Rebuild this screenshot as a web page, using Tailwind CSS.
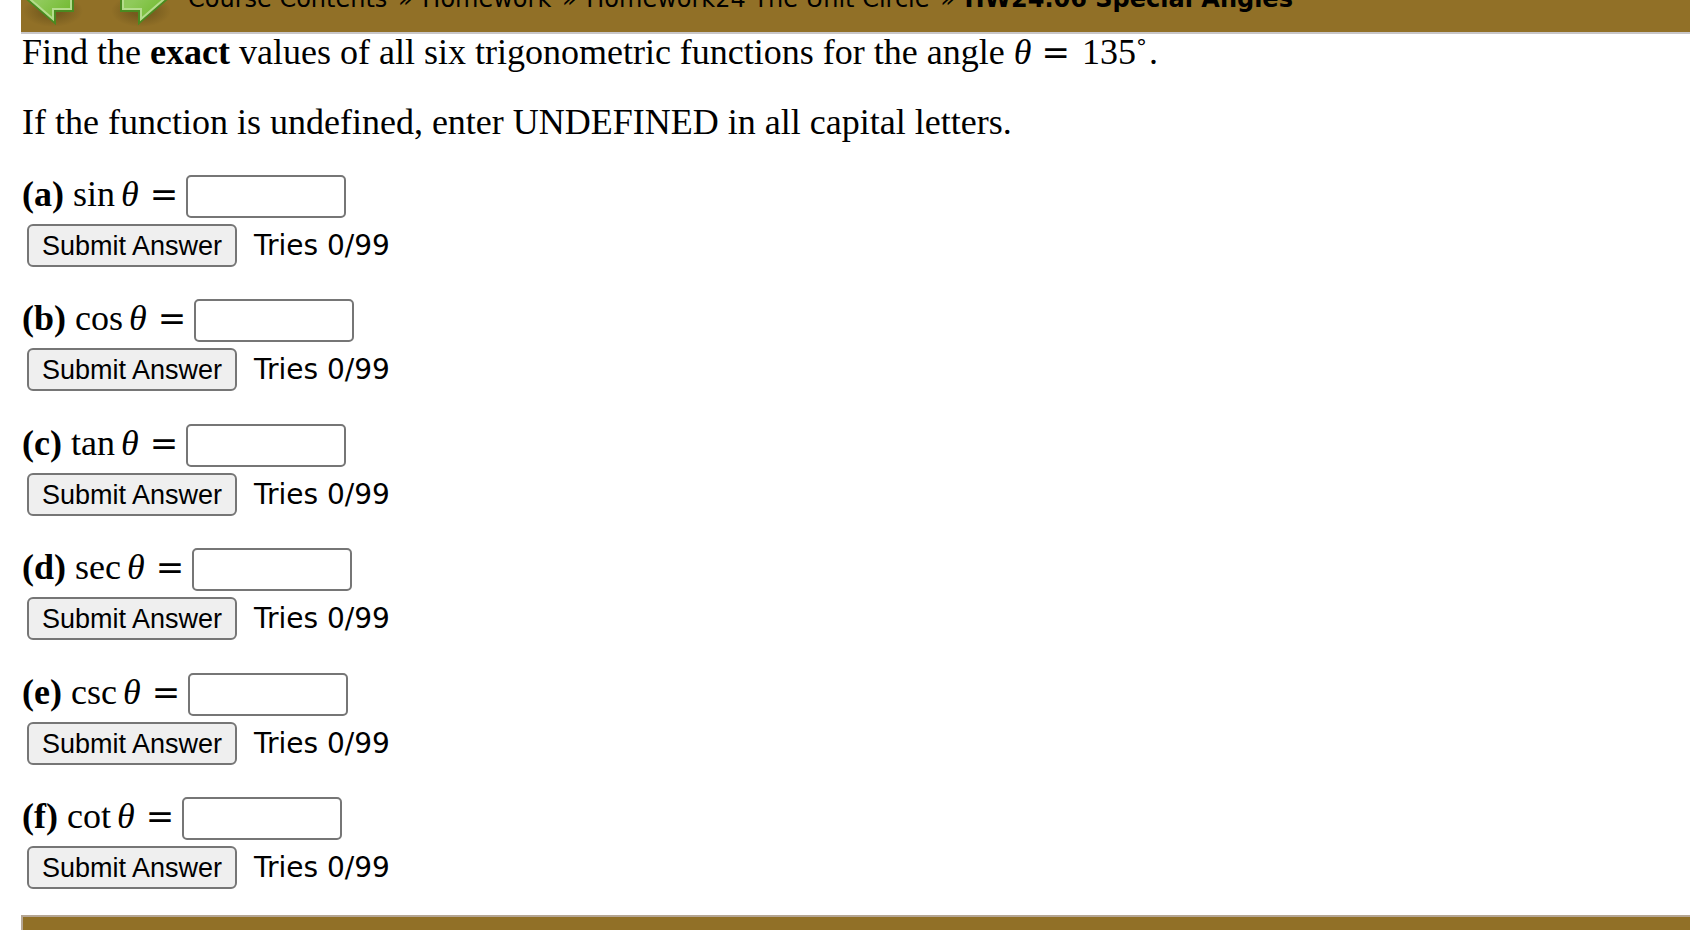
<!DOCTYPE html>
<html lang="en">
<head>
  <meta charset="UTF-8">
  <meta name="viewport" content="width=device-width, initial-scale=1.0">
  <title>HW24.06 Special Angles</title>
  <script src="https://cdn.jsdelivr.net/npm/@tailwindcss/browser@4"></script>
</head>
<body class="bg-white text-black pl-[21px] min-h-screen flex flex-col overflow-hidden font-['Liberation_Serif',serif] text-[36px]">

  <!-- Breadcrumb bar -->
  <nav aria-label="Breadcrumb" class="h-[34px] shrink-0 flex items-end overflow-hidden bg-[#917027] border-b-2 border-[#c8c6c8] font-['DejaVu_Sans',sans-serif] text-[24px] leading-8 whitespace-nowrap">
    <a href="#" aria-label="Previous" class="shrink-0 ml-[6px] mr-[44px]">
      <svg width="48" height="59" viewBox="0 0 48 59" class="block overflow-visible">
        <defs>
          <linearGradient id="leaf" x1="0" y1="0" x2="1" y2="1">
            <stop offset="0.4" stop-color="#8fca5a"/>
            <stop offset="1" stop-color="#68b422"/>
          </linearGradient>
          <radialGradient id="shade">
            <stop offset="0.3" stop-color="#4a3a10" stop-opacity="0.4"/>
            <stop offset="1" stop-color="#4a3a10" stop-opacity="0"/>
          </radialGradient>
        </defs>
        <ellipse cx="26" cy="38" rx="30" ry="16" fill="url(#shade)"/>
        <path d="M1 27 L28 4 V16 H46 V38 H28 V50 Z" fill="url(#leaf)" stroke="#4a8a20" stroke-width="2"/>
        <path d="M4 27 L26 8 V18 H44 V36 H26 V46 Z" fill="none" stroke="#b4dc8c" stroke-width="2"/>
      </svg>
    </a>
    <a href="#" aria-label="Next" class="shrink-0 mr-[21px]">
      <svg width="48" height="59" viewBox="0 0 48 59" class="block overflow-visible">
        <ellipse cx="22" cy="38" rx="30" ry="16" fill="url(#shade)"/>
        <path d="M47 27 L20 4 V16 H2 V38 H20 V50 Z" fill="url(#leaf)" stroke="#4a8a20" stroke-width="2"/>
        <path d="M44 27 L22 8 V18 H4 V36 H22 V46 Z" fill="none" stroke="#b4dc8c" stroke-width="2"/>
      </svg>
    </a>
    <div class="pb-[17px]">
      <a href="#">Course Contents</a> <span class="ml-[3px] mr-[2px]">»</span>
      <a href="#">Homework</a> <span class="ml-[3px] mr-[2px]">»</span>
      <a href="#">Homework24 The Unit Circle</a> <span class="ml-[3px] mr-[2px]">»</span>
      <b>HW24.06 Special Angles</b>
    </div>
  </nav>

  <main class="pl-px pb-[26px]">
    <p class="leading-[36px]">Find the <b>exact</b> values of all six trigonometric functions for the angle <i>θ</i><span class="font-['DejaVu_Serif',serif] text-[34px] leading-none ml-[10px] mr-[12px]">=</span>135<span class="font-['DejaVu_Sans',sans-serif] text-[22px] leading-none align-[9px] mr-[2px]">°</span>.</p>
    <p class="leading-[36px] mt-[34px]">If the function is undefined, enter UNDEFINED in all capital letters.</p>

    <form class="mt-[35px]">
      <div class="mb-8">
        <div class="flex h-[43px]">
          <label for="sin" class="leading-[39px]"><b>(a)</b> sin<i class="ml-[6px]">θ</i><span class="font-['DejaVu_Serif',serif] text-[34px] leading-none ml-[11px]">=</span></label>
          <input id="sin" type="text" class="w-[160px] ml-2 px-1 border-2 border-[#767676] rounded-[5px] bg-white text-[27px] font-['Liberation_Sans',sans-serif]">
        </div>
        <div class="flex items-center mt-[6px] ml-[5px]">
          <button type="button" class="w-[210px] h-[43px] border-2 border-[#767676] rounded-[6px] bg-[#efefef] font-['Liberation_Sans',sans-serif] text-[27px] leading-8 whitespace-nowrap">Submit Answer</button>
          <span class="ml-[17px] font-['DejaVu_Sans',sans-serif] text-[28px] leading-8">Tries 0/99</span>
        </div>
      </div>

      <div class="mb-[33px]">
        <div class="flex h-[43px]">
          <label for="cos" class="leading-[39px]"><b>(b)</b> cos<i class="ml-[6px]">θ</i><span class="font-['DejaVu_Serif',serif] text-[34px] leading-none ml-[11px]">=</span></label>
          <input id="cos" type="text" class="w-[160px] ml-2 px-1 border-2 border-[#767676] rounded-[5px] bg-white text-[27px] font-['Liberation_Sans',sans-serif]">
        </div>
        <div class="flex items-center mt-[6px] ml-[5px]">
          <button type="button" class="w-[210px] h-[43px] border-2 border-[#767676] rounded-[6px] bg-[#efefef] font-['Liberation_Sans',sans-serif] text-[27px] leading-8 whitespace-nowrap">Submit Answer</button>
          <span class="ml-[17px] font-['DejaVu_Sans',sans-serif] text-[28px] leading-8">Tries 0/99</span>
        </div>
      </div>

      <div class="mb-8">
        <div class="flex h-[43px]">
          <label for="tan" class="leading-[39px]"><b>(c)</b> tan<i class="ml-[6px]">θ</i><span class="font-['DejaVu_Serif',serif] text-[34px] leading-none ml-[11px]">=</span></label>
          <input id="tan" type="text" class="w-[160px] ml-2 px-1 border-2 border-[#767676] rounded-[5px] bg-white text-[27px] font-['Liberation_Sans',sans-serif]">
        </div>
        <div class="flex items-center mt-[6px] ml-[5px]">
          <button type="button" class="w-[210px] h-[43px] border-2 border-[#767676] rounded-[6px] bg-[#efefef] font-['Liberation_Sans',sans-serif] text-[27px] leading-8 whitespace-nowrap">Submit Answer</button>
          <span class="ml-[17px] font-['DejaVu_Sans',sans-serif] text-[28px] leading-8">Tries 0/99</span>
        </div>
      </div>

      <div class="mb-[33px]">
        <div class="flex h-[43px]">
          <label for="sec" class="leading-[39px]"><b>(d)</b> sec<i class="ml-[6px]">θ</i><span class="font-['DejaVu_Serif',serif] text-[34px] leading-none ml-[11px]">=</span></label>
          <input id="sec" type="text" class="w-[160px] ml-2 px-1 border-2 border-[#767676] rounded-[5px] bg-white text-[27px] font-['Liberation_Sans',sans-serif]">
        </div>
        <div class="flex items-center mt-[6px] ml-[5px]">
          <button type="button" class="w-[210px] h-[43px] border-2 border-[#767676] rounded-[6px] bg-[#efefef] font-['Liberation_Sans',sans-serif] text-[27px] leading-8 whitespace-nowrap">Submit Answer</button>
          <span class="ml-[17px] font-['DejaVu_Sans',sans-serif] text-[28px] leading-8">Tries 0/99</span>
        </div>
      </div>

      <div class="mb-8">
        <div class="flex h-[43px]">
          <label for="csc" class="leading-[39px]"><b>(e)</b> csc<i class="ml-[6px]">θ</i><span class="font-['DejaVu_Serif',serif] text-[34px] leading-none ml-[11px]">=</span></label>
          <input id="csc" type="text" class="w-[160px] ml-2 px-1 border-2 border-[#767676] rounded-[5px] bg-white text-[27px] font-['Liberation_Sans',sans-serif]">
        </div>
        <div class="flex items-center mt-[6px] ml-[5px]">
          <button type="button" class="w-[210px] h-[43px] border-2 border-[#767676] rounded-[6px] bg-[#efefef] font-['Liberation_Sans',sans-serif] text-[27px] leading-8 whitespace-nowrap">Submit Answer</button>
          <span class="ml-[17px] font-['DejaVu_Sans',sans-serif] text-[28px] leading-8">Tries 0/99</span>
        </div>
      </div>

      <div>
        <div class="flex h-[43px]">
          <label for="cot" class="leading-[39px]"><b>(f)</b> cot<i class="ml-[6px]">θ</i><span class="font-['DejaVu_Serif',serif] text-[34px] leading-none ml-[11px]">=</span></label>
          <input id="cot" type="text" class="w-[160px] ml-2 px-1 border-2 border-[#767676] rounded-[5px] bg-white text-[27px] font-['Liberation_Sans',sans-serif]">
        </div>
        <div class="flex items-center mt-[6px] ml-[5px]">
          <button type="button" class="w-[210px] h-[43px] border-2 border-[#767676] rounded-[6px] bg-[#efefef] font-['Liberation_Sans',sans-serif] text-[27px] leading-8 whitespace-nowrap">Submit Answer</button>
          <span class="ml-[17px] font-['DejaVu_Sans',sans-serif] text-[28px] leading-8">Tries 0/99</span>
        </div>
      </div>
    </form>
  </main>

  <footer class="grow bg-[#917027] border-t-2 border-l-2 border-[#b5a694]"></footer>

</body>
</html>
